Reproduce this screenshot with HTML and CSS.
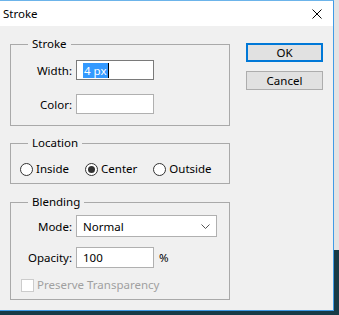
FILE: index.html
```html
<!DOCTYPE html>
<html lang="en">
<head>
  <meta charset="UTF-8">
  <title>Stroke</title>
  <link rel="stylesheet" href="styles.css">
</head>
<body>

  <div class="screen">
    <!-- Dialog window -->
    <div class="dialog">
      <div class="titlebar">
        <span class="title">Stroke</span>
        <svg class="close" width="10" height="10" viewBox="0 0 10 10">
          <path d="M0.5 0.5 L9.5 9.5 M9.5 0.5 L0.5 9.5" stroke="#000" stroke-width="1" fill="none"/>
        </svg>
      </div>

      <div class="content">
        <div class="groups">

          <!-- Stroke -->
          <fieldset class="group group-stroke">
            <legend>Stroke</legend>
            <div class="form-grid">
              <label class="label">Width:</label>
              <div class="field field-focus"><span class="selected">4 px</span><span class="caret"></span></div>
              <label class="label">Color:</label>
              <div class="field"></div>
            </div>
          </fieldset>

          <!-- Location -->
          <fieldset class="group group-location">
            <legend>Location</legend>
            <div class="radios">
              <label class="radio"><span class="dot"></span>Inside</label>
              <label class="radio"><span class="dot checked"></span>Center</label>
              <label class="radio"><span class="dot"></span>Outside</label>
            </div>
          </fieldset>

          <!-- Blending -->
          <fieldset class="group group-blending">
            <legend>Blending</legend>
            <div class="form-grid">
              <label class="label">Mode:</label>
              <div class="select">
                <span>Normal</span>
                <svg width="9" height="5" viewBox="0 0 9 5">
                  <path d="M0.5 0.5 L4.5 4.5 L8.5 0.5" stroke="#555" stroke-width="1" fill="none"/>
                </svg>
              </div>
              <label class="label">Opacity:</label>
              <div class="opacity-row">
                <div class="field">100</div>
                <span class="unit">%</span>
              </div>
            </div>
            <label class="check"><span class="box"></span>Preserve Transparency</label>
          </fieldset>

        </div>

        <div class="buttons">
          <button class="btn btn-default">OK</button>
          <button class="btn">Cancel</button>
        </div>
      </div>
    </div>

    <!-- bits of desktop behind the dialog -->
    <div class="side">
      <div class="side-top"></div>
    </div>
  </div>

</body>
</html>
```

FILE: styles.css
```css
/* Basic Styles */
* {
  margin: 0;
  padding: 0;
  box-sizing: border-box;
}

body {
  font-family: 'Noto Sans', 'Liberation Sans', sans-serif;
  font-size: 11.5px;
  color: #000;
  background-color: #173b47;
}

.screen {
  display: flex;
  width: 339px;
  height: 315px;
  background-color: #173b47;
}

.dialog {
  width: 334px;
  height: 311px;
  display: flex;
  flex-direction: column;
  background-color: #f0f0f0;
  border-top: 1px solid #6cb4ea;
  border-right: 1px solid #3f9be6;
  border-bottom: 1px solid #3f9be6;
}

.side {
  flex: 1;
}

.side-top {
  height: 250px;
  background-color: #e3e3e3;
}

/* Title bar */
.titlebar {
  height: 25px;
  background-color: #fff;
  display: flex;
  align-items: center;
  justify-content: space-between;
  padding: 0 11px 0 3px;
}

.title {
  line-height: 16px;
}

/* Content */
.content {
  flex: 1;
  display: flex;
  align-items: flex-start;
  padding: 10px 0 0 10px;
}

.groups {
  width: 220px;
  display: flex;
  flex-direction: column;
}

.group {
  border: 1px solid #a9a9a9;
  min-width: 0;
}

.group legend {
  margin-left: 17px;
  padding: 0 4px;
  line-height: 16px;
}

.group-stroke {
  padding: 8px 0 11px 0;
}

.group-location {
  margin-top: 9px;
  padding: 10px 0 6px 0;
}

.group-blending {
  margin-top: 10px;
  padding: 5px 0 6px 0;
}

.form-grid {
  display: grid;
  grid-template-columns: 61px auto;
  column-gap: 4px;
  row-gap: 14px;
  align-items: center;
}

.group-blending .form-grid {
  row-gap: 10px;
}

.label {
  text-align: right;
}

.field {
  width: 78px;
  height: 20px;
  background-color: #fff;
  border: 1px solid #b0b0b0;
  padding: 0 0 0 6px;
  line-height: 18px;
  display: flex;
  align-items: center;
}

.field-focus {
  border-color: #7a7a7a;
}

.selected {
  background-color: #3399ff;
  color: #fff;
  line-height: 15px;
  padding: 0 1px;
}

.caret {
  width: 1px;
  height: 15px;
  background-color: #000;
}

.select {
  width: 141px;
  height: 22px;
  background-color: #fff;
  border: 1px solid #b0b0b0;
  display: flex;
  align-items: center;
  justify-content: space-between;
  padding: 0 6px 0 6px;
}

.opacity-row {
  display: flex;
  align-items: center;
  gap: 5px;
}

.group-blending .field {
  height: 21px;
}

/* Radios */
.radios {
  display: flex;
  line-height: 16px;
  padding-left: 9px;
}

.radio {
  display: flex;
  align-items: center;
  gap: 3px;
}

.radio + .radio {
  margin-left: 16px;
}

.dot {
  width: 13px;
  height: 13px;
  border: 1px solid #333;
  border-radius: 50%;
  background-color: #fff;
  display: flex;
  align-items: center;
  justify-content: center;
}

.dot.checked::after {
  content: '';
  width: 7px;
  height: 7px;
  border-radius: 50%;
  background-color: #333;
}

/* Checkbox */
.check {
  display: flex;
  align-items: center;
  gap: 3px;
  margin: 9px 0 0 10px;
  color: #a0a0a0;
  line-height: 16px;
}

.box {
  width: 13px;
  height: 13px;
  border: 1px solid #cccccc;
  background-color: #fff;
}

/* Buttons */
.buttons {
  display: flex;
  flex-direction: column;
  gap: 9px;
  margin: 7px 0 0 16px;
}

.btn {
  width: 77px;
  height: 19px;
  font-family: inherit;
  font-size: 11.5px;
  background-color: #e1e1e1;
  border: 1px solid #adadad;
  color: #000;
}

.btn-default {
  border: 2px solid #0078d7;
}
```
